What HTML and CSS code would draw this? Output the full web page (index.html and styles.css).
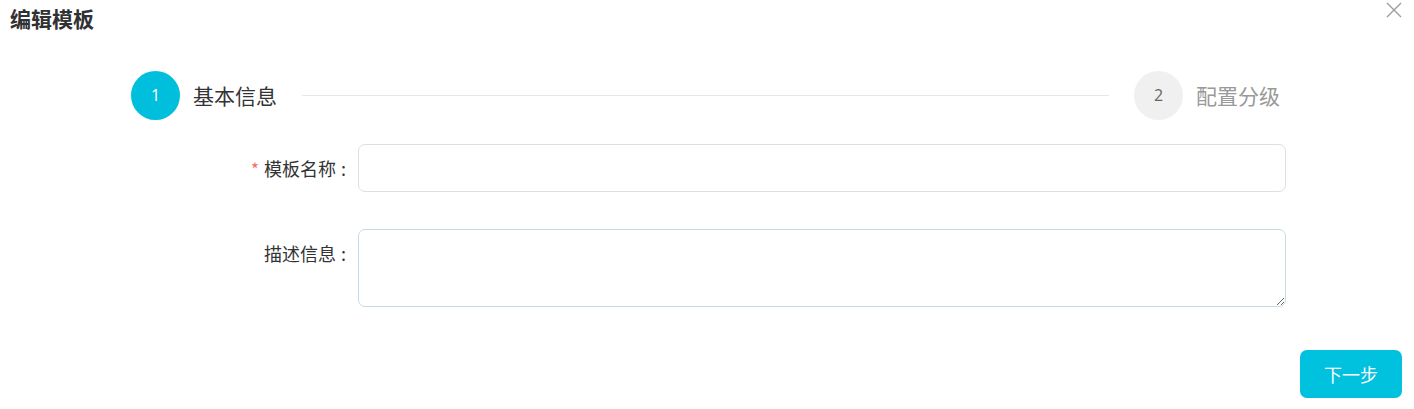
FILE: index.html
```html
<!DOCTYPE html>
<html lang="zh">
<head>
<meta charset="utf-8">
<link rel="stylesheet" href="styles.css">
</head>
<body>
<div class="dialog">
  <header class="dialog-header">
    <h1 class="dialog-title">编辑模板</h1>
    <button class="close-btn" aria-label="关闭">
      <svg width="16" height="16" viewBox="0 0 16 16"><path d="M1 1L15 15M15 1L1 15" stroke="#9a9a9a" stroke-width="1.3" fill="none"/></svg>
    </button>
  </header>

  <div class="steps">
    <div class="step active">
      <span class="step-num">1</span>
      <span class="step-title">基本信息</span>
    </div>
    <div class="step-line"></div>
    <div class="step">
      <span class="step-num">2</span>
      <span class="step-title">配置分级</span>
    </div>
  </div>

  <form class="form">
    <div class="form-row">
      <label class="form-label"><span class="req">*</span>模板名称<span class="colon">:</span></label>
      <input class="form-input" type="text">
    </div>
    <div class="form-row row-area">
      <label class="form-label">描述信息<span class="colon">:</span></label>
      <textarea class="form-textarea"></textarea>
    </div>
  </form>

  <footer class="dialog-footer">
    <button class="btn-primary" type="button">下一步</button>
  </footer>
</div>
</body>
</html>
```

FILE: styles.css
```css
* { box-sizing: border-box; }
html, body { margin: 0; padding: 0; background: #fff; }
body {
  font-family: "Noto Sans CJK SC", "Noto Sans", sans-serif;
  color: #333;
  width: 1414px;
  height: 409px;
  overflow: hidden;
}
.dialog { padding: 0 12px 0 10px; }
.dialog-header {
  display: flex;
  justify-content: space-between;
  align-items: flex-start;
  height: 70px;
}
.dialog-title {
  margin: 4px 0 0 0;
  font-size: 21px;
  line-height: 28px;
  font-weight: 700;
  color: #303133;
}
.close-btn {
  border: 0;
  background: none;
  padding: 0;
  margin: 2px 0 0 0;
  width: 16px;
  height: 16px;
  display: block;
}
.close-btn svg { display: block; }

.steps {
  display: flex;
  align-items: center;
  margin-left: 121px;
  width: 1149px;
  height: 50px;
}
.step { display: flex; align-items: center; }
.step-num {
  width: 49px;
  height: 49px;
  border-radius: 50%;
  background: #f0f0f0;
  color: #666;
  font-family: "Open Sans", "Noto Sans", sans-serif;
  font-size: 16px;
  display: flex;
  align-items: center;
  justify-content: center;
}
.step-title {
  margin-left: 13px;
  font-size: 21px;
  color: #999;
  line-height: 28px;
}
.step.active .step-num { background: #00bfdc; color: #fff; }
.step.active .step-title { color: #333; }
.step-line {
  flex: 1;
  height: 1px;
  background: #e4e7ed;
  margin: 0 25px 0 25px;
}

.form { margin-top: 24px; }
.form-row {
  display: flex;
  align-items: center;
}
.row-area { margin-top: 37px; align-items: flex-start; }
.row-area .form-label { margin-top: 12px; }
.form-label {
  width: 348px;
  padding-right: 12px;
  text-align: right;
  font-size: 18px;
  line-height: 24px;
  color: #333;
}
.colon { margin-left: 5px; }
.req { color: #f56c6c; margin-right: 5px; font-size: 17px; }
.form-input {
  width: 928px;
  height: 48px;
  border: 1px solid #dcdfe6;
  border-radius: 7px;
  outline: none;
  font: inherit;
}
.form-textarea {
  width: 928px;
  height: 78px;
  border: 1px solid #c5dde2;
  border-radius: 7px;
  outline: none;
  font: inherit;
  resize: vertical;
  display: block;
}

.dialog-footer {
  display: flex;
  justify-content: flex-end;
  margin-top: 43px;
}
.btn-primary {
  width: 102px;
  height: 48px;
  border: 0;
  border-radius: 7px;
  background: #00c1de;
  color: #fff;
  font-family: "Noto Sans CJK SC", sans-serif;
  font-size: 18px;
}
```
